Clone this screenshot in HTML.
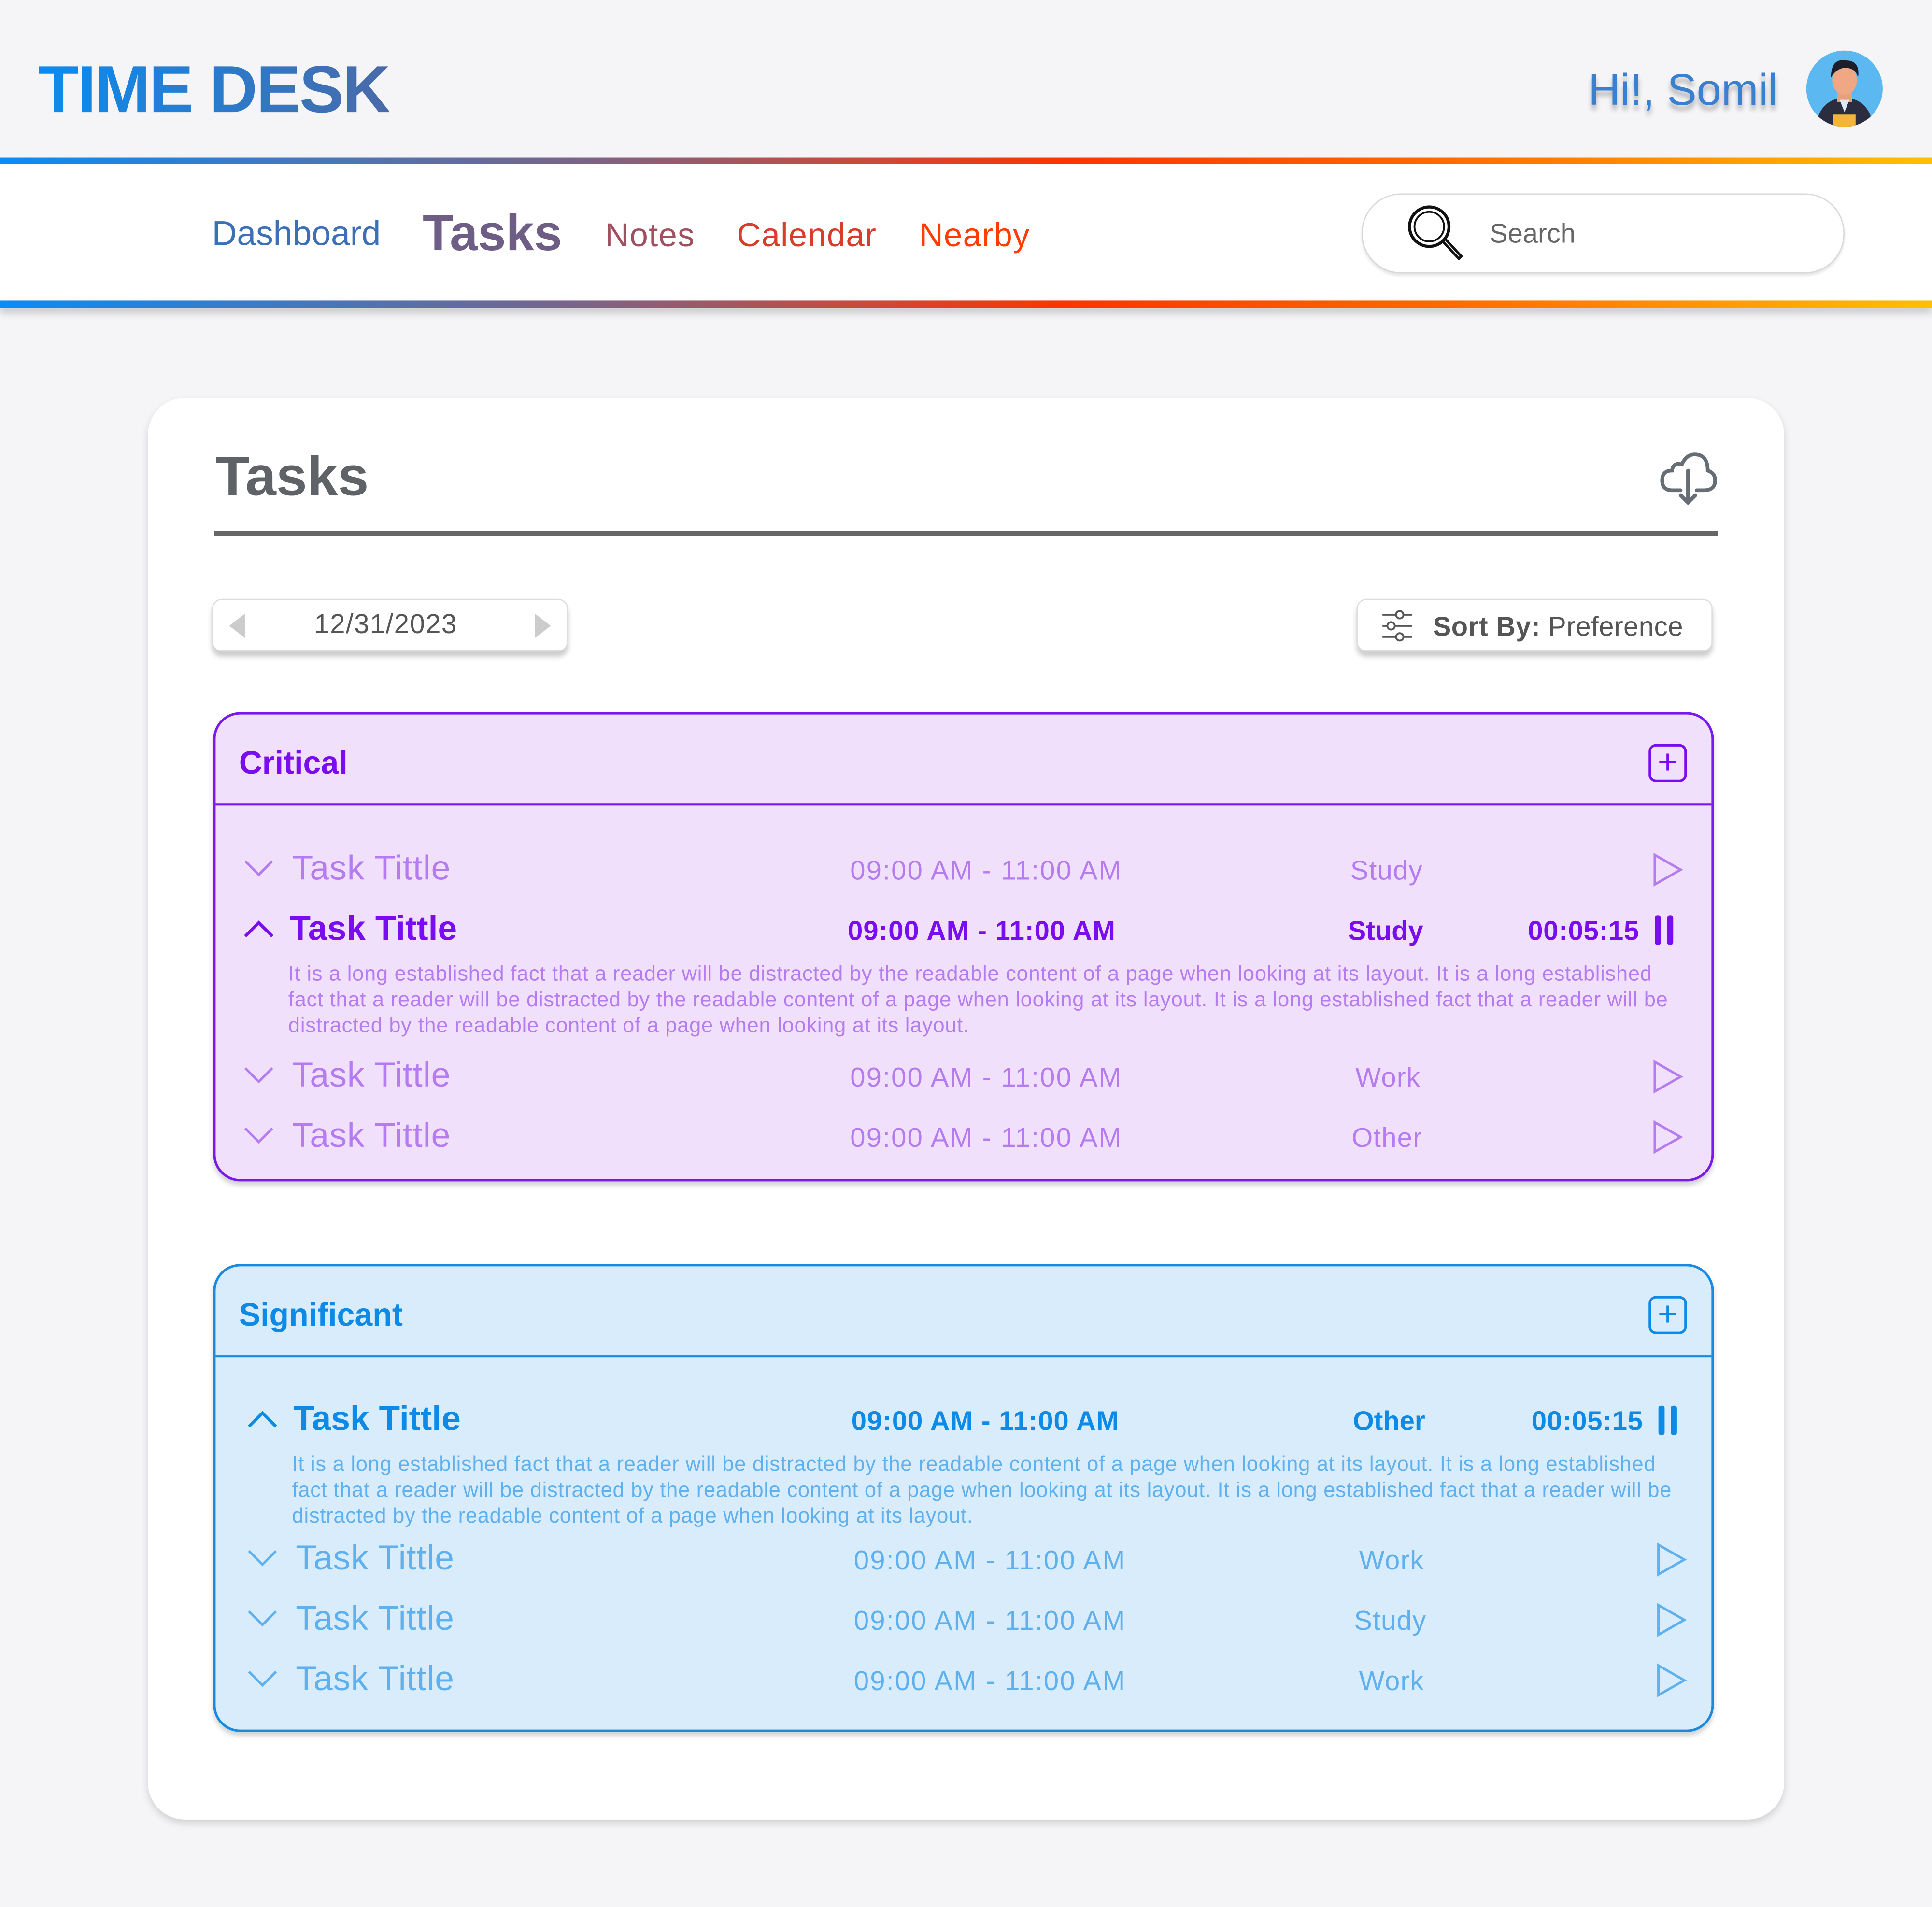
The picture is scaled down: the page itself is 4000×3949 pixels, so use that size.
<!DOCTYPE html>
<html><head><meta charset="utf-8"><style>
html,body{margin:0;padding:0;}
body{width:4000px;height:3948px;overflow:hidden;background:#f5f5f7;font-family:"Liberation Sans",sans-serif;}
#s{position:absolute;left:0;top:0;width:1568px;height:1548px;transform:scale(2.5510);transform-origin:0 0;}
.a{position:absolute;white-space:nowrap;}
.grad{background:linear-gradient(90deg,#0a8cf5,#7a6488 30%,#c94a3a 45%,#ff3300 55%,#ff6a00 75%,#ffc000);}
.box{position:absolute;border-radius:22px;border:2px solid;box-shadow:0 3px 4px rgba(0,0,0,.18);}
.row{position:absolute;left:0;width:1217px;height:30px;}
.row .t{position:absolute;font-size:28px;top:-3px;letter-spacing:0.4px;}
.row .tm{position:absolute;font-size:22px;top:2px;letter-spacing:0.9px;}
.row .c{position:absolute;font-size:22px;top:2px;letter-spacing:0.5px;}
.desc{position:absolute;font-size:17px;line-height:21px;width:1130px;white-space:normal;letter-spacing:0.3px;}
</style></head><body><div id="s">
<div class="a" style="left:31px;top:42px;font-size:54px;font-weight:bold;letter-spacing:-1px;background:linear-gradient(90deg,#0a8cf0,#4a6aa8);-webkit-background-clip:text;color:transparent;">TIME DESK</div>
<div class="a" style="left:1289px;top:52px;font-size:36px;color:#3a80d2;text-shadow:0 4px 4px rgba(0,0,0,.3);">Hi!, Somil</div>
<svg class="a" style="left:1466px;top:41px" width="62" height="62" viewBox="0 0 62 62"><defs><clipPath id="cp"><circle cx="31" cy="31" r="31"/></clipPath></defs><circle cx="31" cy="31" r="31" fill="#5bb8f0"/><g clip-path="url(#cp)"><path d="M8 62 Q10 40 31 38 Q52 40 54 62Z" fill="#2b2d3e"/><rect x="25" y="30" width="12" height="12" fill="#e8a07a"/><path d="M27 40 L31 50 L35 40Z" fill="#dfe8f0"/><ellipse cx="31" cy="24" rx="10" ry="12" fill="#f0a884"/><path d="M20 22 Q20 6 32 8 Q44 8 42 22 Q40 14 31 14 Q24 15 20 22Z" fill="#1e1e2a"/><rect x="22" y="52" width="18" height="10" fill="#f2b53a"/></g></svg>
<div class="a grad" style="left:0;top:128px;width:1568px;height:5px;"></div>
<div class="a" style="left:0;top:133px;width:1568px;height:112px;background:#fff;"></div>
<div class="a grad" style="left:0;top:244px;width:1568px;height:6px;box-shadow:0 4px 6px rgba(0,0,0,.2);"></div>
<div class="a" style="left:172px;top:174px;font-size:28px;color:#3b6fb8;">Dashboard</div>
<div class="a" style="left:343px;top:166px;font-size:41px;font-weight:bold;color:#6e5d84;">Tasks</div>
<div class="a" style="left:491px;top:176px;font-size:27px;color:#a0505e;letter-spacing:0.5px;">Notes</div>
<div class="a" style="left:598px;top:176px;font-size:27px;color:#d83c2a;letter-spacing:0.5px;">Calendar</div>
<div class="a" style="left:746px;top:176px;font-size:27px;color:#ff3d00;letter-spacing:0.5px;">Nearby</div>
<div class="a" style="left:1105px;top:157px;width:390px;height:63px;border:1px solid #d8d8d8;border-radius:32px;background:#fff;box-shadow:0 2px 2px rgba(0,0,0,.1);"></div>
<svg class="a" style="left:1140px;top:166px" width="50" height="48" viewBox="0 0 50 48"><circle cx="20" cy="18" r="16" fill="none" stroke="#111" stroke-width="2.5"/><circle cx="20" cy="18" r="12" fill="none" stroke="#111" stroke-width="1.5"/><path d="M31 30 L44 44 L46 42 L33 28" fill="none" stroke="#111" stroke-width="2"/></svg>
<div class="a" style="left:1209px;top:177px;font-size:22px;color:#666;">Search</div>

<div class="a" style="left:120px;top:323px;width:1328px;height:1154px;background:#fff;border-radius:30px;box-shadow:0 3px 6px rgba(0,0,0,.15);"></div>
<div class="a" style="left:175px;top:361px;font-size:45px;font-weight:bold;color:#5f6368;">Tasks</div>
<svg class="a" style="left:1345px;top:360px" width="50" height="50" viewBox="0 0 50 50" fill="none" stroke="#666d74" stroke-width="3" stroke-linecap="round"><path d="M19 38 H12 Q4 38 4 30 Q4 22 12 22 Q13 15 20 17 Q24 8 32 9 Q41 10 41 22 Q47 24 47 30 Q47 38 38 38 H32"/><path d="M25 22 V48 M19 42 L25 48 L31 42"/></svg>
<div class="a" style="left:174px;top:431px;width:1220px;height:4px;background:#666;"></div>

<div class="a" style="left:172px;top:486px;width:287px;height:41px;background:#fff;border:1px solid #ddd;border-radius:8px;box-shadow:0 4px 4px rgba(0,0,0,.2);"></div>
<div class="a" style="left:186px;top:498px;width:0;height:0;border-top:10px solid transparent;border-bottom:10px solid transparent;border-right:13px solid #ccc;"></div>
<div class="a" style="left:434px;top:498px;width:0;height:0;border-top:10px solid transparent;border-bottom:10px solid transparent;border-left:13px solid #ccc;"></div>
<div class="a" style="left:255px;top:494px;font-size:22px;color:#555;letter-spacing:0.6px;">12/31/2023</div>
<div class="a" style="left:1101px;top:486px;width:287px;height:41px;background:#fff;border:1px solid #ddd;border-radius:8px;box-shadow:0 4px 4px rgba(0,0,0,.2);"></div>
<svg class="a" style="left:1120px;top:493px" width="28" height="30" viewBox="0 0 28 30" fill="none" stroke="#555" stroke-width="1.5"><path d="M2 6H26M2 15H26M2 24H26"/><circle cx="16" cy="6" r="3" fill="#fff"/><circle cx="9" cy="15" r="3" fill="#fff"/><circle cx="16" cy="24" r="3" fill="#fff"/></svg>
<div class="a" style="left:1163px;top:496px;font-size:22px;color:#555;letter-spacing:0.2px;"><b>Sort By:</b> Preference</div>

<!-- Critical -->
<div class="box" style="left:173px;top:578px;width:1214px;height:377px;background:#f0e0fc;border-color:#7a18f0;"></div>
<div class="a" style="left:194px;top:604px;font-size:26px;font-weight:bold;color:#7a0cf0;">Critical</div>
<div class="a" style="left:1338px;top:604px;width:27px;height:27px;border:2.5px solid #7a0cf0;border-radius:6px;color:#7a0cf0;font-size:28px;line-height:26px;text-align:center;">+</div>
<div class="a" style="left:175px;top:652px;width:1214px;height:2px;background:#7a18f0;"></div>
<div class="a" style="left:175px;top:0;width:1217px;height:1548px;">
 <div class="row" style="top:692px;color:#b57cf2;"><svg class="a" style="left:22px;top:5px" width="26" height="16"><path d="M2 2 L13 13 L24 2" fill="none" stroke="#b57cf2" stroke-width="2"/></svg><span class="t" style="left:62px">Task Tittle</span><span class="tm" style="left:515px">09:00 AM - 11:00 AM</span><span class="c" style="left:921px">Study</span><svg class="a" style="left:1166px;top:0" width="26" height="28"><path d="M2 2 L23 14 L2 26Z" fill="none" stroke="#b57cf2" stroke-width="2"/></svg></div>
 <div class="row" style="top:741px;color:#7a0cf0;font-weight:bold;"><svg class="a" style="left:22px;top:5px" width="26" height="16"><path d="M2 14 L13 3 L24 14" fill="none" stroke="#7a0cf0" stroke-width="2.5"/></svg><span class="t" style="left:60px;letter-spacing:0">Task Tittle</span><span class="tm" style="left:513px;letter-spacing:0.4px">09:00 AM - 11:00 AM</span><span class="c" style="left:919px;letter-spacing:0">Study</span><span class="c" style="left:1065px;letter-spacing:0.3px">00:05:15</span><div class="a" style="left:1168px;top:2px;width:5px;height:24px;background:#7a0cf0;border-radius:2px"></div><div class="a" style="left:1178px;top:2px;width:5px;height:24px;background:#7a0cf0;border-radius:2px"></div></div>
 <div class="desc" style="left:59px;top:780px;color:#b57cf2;">It is a long established fact that a reader will be distracted by the readable content of a page when looking at its layout. It is a long established fact that a reader will be distracted by the readable content of a page when looking at its layout. It is a long established fact that a reader will be distracted by the readable content of a page when looking at its layout.</div>
 <div class="row" style="top:860px;color:#b57cf2;"><svg class="a" style="left:22px;top:5px" width="26" height="16"><path d="M2 2 L13 13 L24 2" fill="none" stroke="#b57cf2" stroke-width="2"/></svg><span class="t" style="left:62px">Task Tittle</span><span class="tm" style="left:515px">09:00 AM - 11:00 AM</span><span class="c" style="left:925px">Work</span><svg class="a" style="left:1166px;top:0" width="26" height="28"><path d="M2 2 L23 14 L2 26Z" fill="none" stroke="#b57cf2" stroke-width="2"/></svg></div>
 <div class="row" style="top:909px;color:#b57cf2;"><svg class="a" style="left:22px;top:5px" width="26" height="16"><path d="M2 2 L13 13 L24 2" fill="none" stroke="#b57cf2" stroke-width="2"/></svg><span class="t" style="left:62px">Task Tittle</span><span class="tm" style="left:515px">09:00 AM - 11:00 AM</span><span class="c" style="left:922px">Other</span><svg class="a" style="left:1166px;top:0" width="26" height="28"><path d="M2 2 L23 14 L2 26Z" fill="none" stroke="#b57cf2" stroke-width="2"/></svg></div>
</div>

<!-- Significant -->
<div class="box" style="left:173px;top:1026px;width:1214px;height:376px;background:#d9ecfb;border-color:#1a8ae0;"></div>
<div class="a" style="left:194px;top:1052px;font-size:26px;font-weight:bold;color:#0d8ae6;">Significant</div>
<div class="a" style="left:1338px;top:1052px;width:27px;height:27px;border:2.5px solid #0d8ae6;border-radius:6px;color:#0d8ae6;font-size:28px;line-height:26px;text-align:center;">+</div>
<div class="a" style="left:175px;top:1100px;width:1214px;height:2px;background:#1a8ae0;"></div>
<div class="a" style="left:178px;top:0;width:1217px;height:1548px;">
 <div class="row" style="top:1139px;color:#0d8ae6;font-weight:bold;"><svg class="a" style="left:22px;top:5px" width="26" height="16"><path d="M2 14 L13 3 L24 14" fill="none" stroke="#0d8ae6" stroke-width="2.5"/></svg><span class="t" style="left:60px;letter-spacing:0">Task Tittle</span><span class="tm" style="left:513px;letter-spacing:0.4px">09:00 AM - 11:00 AM</span><span class="c" style="left:920px;letter-spacing:0">Other</span><span class="c" style="left:1065px;letter-spacing:0.3px">00:05:15</span><div class="a" style="left:1168px;top:2px;width:5px;height:24px;background:#0d8ae6;border-radius:2px"></div><div class="a" style="left:1178px;top:2px;width:5px;height:24px;background:#0d8ae6;border-radius:2px"></div></div>
 <div class="desc" style="left:59px;top:1178px;color:#5fb0ee;">It is a long established fact that a reader will be distracted by the readable content of a page when looking at its layout. It is a long established fact that a reader will be distracted by the readable content of a page when looking at its layout. It is a long established fact that a reader will be distracted by the readable content of a page when looking at its layout.</div>
 <div class="row" style="top:1252px;color:#5fb0ee;"><svg class="a" style="left:22px;top:5px" width="26" height="16"><path d="M2 2 L13 13 L24 2" fill="none" stroke="#5fb0ee" stroke-width="2"/></svg><span class="t" style="left:62px">Task Tittle</span><span class="tm" style="left:515px">09:00 AM - 11:00 AM</span><span class="c" style="left:925px">Work</span><svg class="a" style="left:1166px;top:0" width="26" height="28"><path d="M2 2 L23 14 L2 26Z" fill="none" stroke="#5fb0ee" stroke-width="2"/></svg></div>
 <div class="row" style="top:1301px;color:#5fb0ee;"><svg class="a" style="left:22px;top:5px" width="26" height="16"><path d="M2 2 L13 13 L24 2" fill="none" stroke="#5fb0ee" stroke-width="2"/></svg><span class="t" style="left:62px">Task Tittle</span><span class="tm" style="left:515px">09:00 AM - 11:00 AM</span><span class="c" style="left:921px">Study</span><svg class="a" style="left:1166px;top:0" width="26" height="28"><path d="M2 2 L23 14 L2 26Z" fill="none" stroke="#5fb0ee" stroke-width="2"/></svg></div>
 <div class="row" style="top:1350px;color:#5fb0ee;"><svg class="a" style="left:22px;top:5px" width="26" height="16"><path d="M2 2 L13 13 L24 2" fill="none" stroke="#5fb0ee" stroke-width="2"/></svg><span class="t" style="left:62px">Task Tittle</span><span class="tm" style="left:515px">09:00 AM - 11:00 AM</span><span class="c" style="left:925px">Work</span><svg class="a" style="left:1166px;top:0" width="26" height="28"><path d="M2 2 L23 14 L2 26Z" fill="none" stroke="#5fb0ee" stroke-width="2"/></svg></div>
</div>
</div></body></html>
